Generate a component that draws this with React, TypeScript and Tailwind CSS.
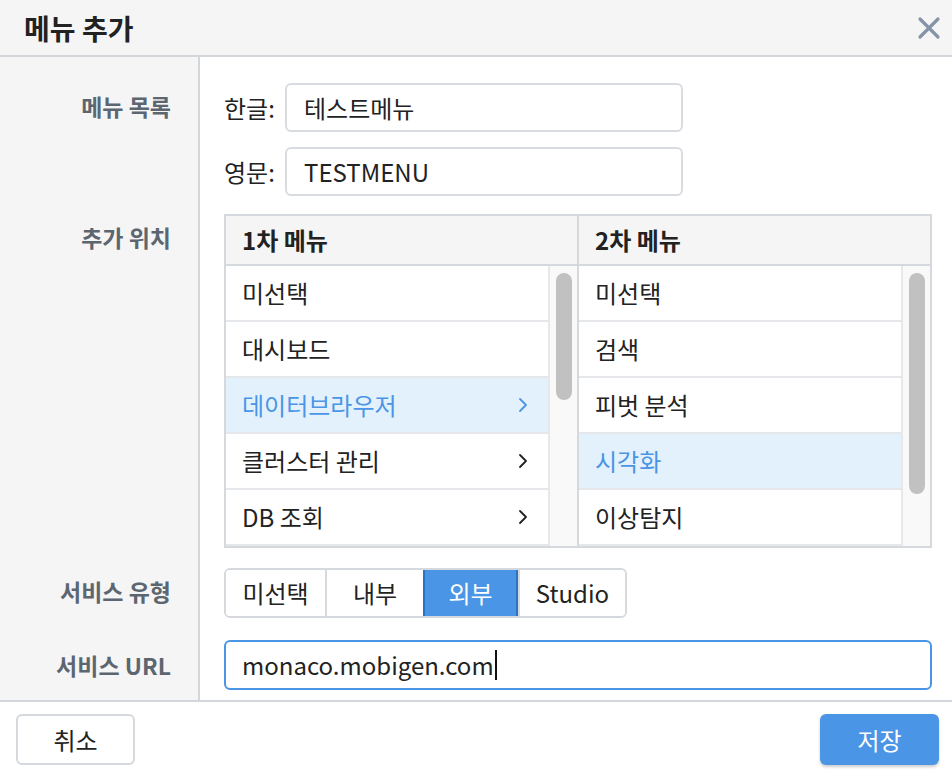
import React from "react";

const firstMenu = [
	{ label: "미선택", arrow: false, active: false },
	{ label: "대시보드", arrow: false, active: false },
	{ label: "데이터브라우저", arrow: true, active: true },
	{ label: "클러스터 관리", arrow: true, active: false },
	{ label: "DB 조회", arrow: true, active: false },
];

const secondMenu = [
	{ label: "미선택", arrow: false, active: false },
	{ label: "검색", arrow: false, active: false },
	{ label: "피벗 분석", arrow: false, active: false },
	{ label: "시각화", arrow: false, active: true },
	{ label: "이상탐지", arrow: false, active: false },
];

const serviceTypes = [
	{ label: "미선택", width: "w-[99px]", active: false },
	{ label: "내부", width: "w-[98px]", active: false },
	{ label: "외부", width: "w-[95px]", active: true },
	{ label: "Studio", width: "w-[107px]", active: false },
];

type Item = { label: string; arrow: boolean; active: boolean };

const Chevron = ({ className }: { className: string }) => (
	<svg width="10" height="16" viewBox="0 0 10 16" className={className}>
		<path d="M2 2 L8 8 L2 14" fill="none" stroke="currentColor" strokeWidth="1.8" strokeLinecap="round" strokeLinejoin="round" />
	</svg>
);

const MenuColumn = ({ title, items, thumb, last }: { title: string; items: Item[]; thumb: string; last?: boolean }) => (
	<div className={`flex flex-col flex-1 ${last ? "" : "border-r-2 border-[#d5d8dc]"}`}>
		<div className="h-[50px] bg-[#f5f5f5] border-b-2 border-[#d5d8dc] flex items-center pl-[16px] text-[24px] font-bold text-[#222]">
			{title}
		</div>
		<div className="flex h-[282px]">
			<div className="flex-1 flex flex-col">
				{items.map((it) => (
					<div
						key={it.label}
						className={`h-[56px] shrink-0 flex items-center justify-between pl-[16px] pr-[20px] border-b-2 border-[#e5e7ea] text-[24px] ${
							it.active ? "bg-[#e3f1fd] text-[#4a95e6]" : "bg-white text-[#222]"
						}`}
					>
						<span>{it.label}</span>
						{it.arrow && <Chevron className={it.active ? "text-[#4a95e6]" : "text-[#222]"} />}
					</div>
				))}
			</div>
			<div className="w-[29px] bg-[#f9f9f9] border-l-2 border-[#e8e8e8] pt-[7px] flex justify-center">
				<div className={`w-[16px] rounded-full bg-[#c1c1c1] ${thumb}`} />
			</div>
		</div>
	</div>
);

export default function App() {
	return (
		<div className="w-[952px] h-[776px] flex flex-col bg-white text-[#222] font-['Noto_Sans_CJK_KR','Noto_Sans',sans-serif]">
			{/* Header */}
			<div className="h-[57px] shrink-0 bg-[#f5f5f5] border-b-2 border-[#d3d6da] flex items-center justify-between pl-[24px] pr-[11px]">
				<h1 className="text-[28px] font-bold text-[#222] leading-none">메뉴 추가</h1>
				<svg width="24" height="24" viewBox="0 0 24 24" className="text-[#8494a6]">
					<path d="M3 3 L21 21 M21 3 L3 21" stroke="currentColor" strokeWidth="3.2" strokeLinecap="round" />
				</svg>
			</div>

			{/* Body */}
			<div className="flex-1 flex flex-col">
				{/* 메뉴 목록 */}
				<div className="flex">
					<div className="w-[200px] shrink-0 bg-[#f5f5f5] border-r-2 border-[#d3d6da] pt-[24px] pr-[27px] text-right">
						<div className="h-[50px] leading-[50px] text-[23px] font-bold text-[#5c6670]">메뉴 목록</div>
					</div>
					<div className="flex-1 pl-[24px] pt-[26px] flex flex-col gap-[15px]">
						<div className="flex items-center">
							<span className="w-[61px] text-[24px]">한글:</span>
							<div className="w-[398px] h-[49px] border-2 border-[#d8dbdf] rounded-[6px] flex items-center pl-[17px] text-[24px]">
								테스트메뉴
							</div>
						</div>
						<div className="flex items-center">
							<span className="w-[61px] text-[24px]">영문:</span>
							<div className="w-[398px] h-[49px] border-2 border-[#d8dbdf] rounded-[6px] flex items-center pl-[17px] text-[24px]">
								TESTMENU
							</div>
						</div>
					</div>
				</div>

				{/* 추가 위치 */}
				<div className="flex">
					<div className="w-[200px] shrink-0 bg-[#f5f5f5] border-r-2 border-[#d3d6da] pt-[16px] pr-[27px] text-right">
						<div className="h-[50px] leading-[50px] text-[23px] font-bold text-[#5c6670]">추가 위치</div>
					</div>
					<div className="flex-1 pl-[24px] pr-[20px] pt-[18px]">
						<div className="flex border-2 border-[#d5d8dc] h-[334px]">
							<MenuColumn title="1차 메뉴" items={firstMenu} thumb="h-[127px]" />
							<MenuColumn title="2차 메뉴" items={secondMenu} thumb="h-[221px]" last />
						</div>
					</div>
				</div>

				{/* 서비스 유형 */}
				<div className="flex">
					<div className="w-[200px] shrink-0 bg-[#f5f5f5] border-r-2 border-[#d3d6da] pt-[18px] pr-[27px] text-right">
						<div className="h-[50px] leading-[50px] text-[23px] font-bold text-[#5c6670]">서비스 유형</div>
					</div>
					<div className="flex-1 pl-[24px] pt-[20px]">
						<div className="inline-flex h-[50px] border-2 border-[#d5d8dc] rounded-[6px] overflow-hidden">
							{serviceTypes.map((t, i) => (
								<div
									key={t.label}
									className={`${t.width} flex items-center justify-center text-[24px] ${
										i > 0 ? "border-l-2" : ""
									} ${t.active ? "bg-[#4a95e6] text-white border-[#2f72c0] border-2 -my-[2px]" : "bg-white text-[#222] border-[#d5d8dc]"}`}
								>
									{t.label}
								</div>
							))}
						</div>
					</div>
				</div>

				{/* 서비스 URL */}
				<div className="flex flex-1">
					<div className="w-[200px] shrink-0 bg-[#f5f5f5] border-r-2 border-[#d3d6da] pt-[22px] pr-[27px] text-right">
						<div className="h-[50px] leading-[50px] text-[23px] font-bold text-[#5c6670]">서비스 URL</div>
					</div>
					<div className="flex-1 pl-[24px] pr-[20px] pt-[22px]">
						<div className="h-[50px] border-2 border-[#4a95e6] rounded-[6px] flex items-center pl-[16px] text-[24px]">
							<span>monaco.mobigen.com</span>
							<span className="w-[2px] h-[30px] bg-[#111] ml-[1px]" />
						</div>
					</div>
				</div>
			</div>

			{/* Footer */}
			<div className="h-[76px] shrink-0 border-t-2 border-[#d3d6da] flex items-start justify-between px-[16px] pt-[12px]">
				<button className="w-[119px] h-[51px] border-2 border-[#d5d8dc] rounded-[6px] bg-white text-[24px] text-[#222]">취소</button>
				<button className="w-[119px] h-[51px] rounded-[6px] bg-[#4a95e6] text-[24px] text-white shadow-[0_2px_3px_rgba(0,0,0,0.2)] mr-[-3px]">저장</button>
			</div>
		</div>
	);
}
